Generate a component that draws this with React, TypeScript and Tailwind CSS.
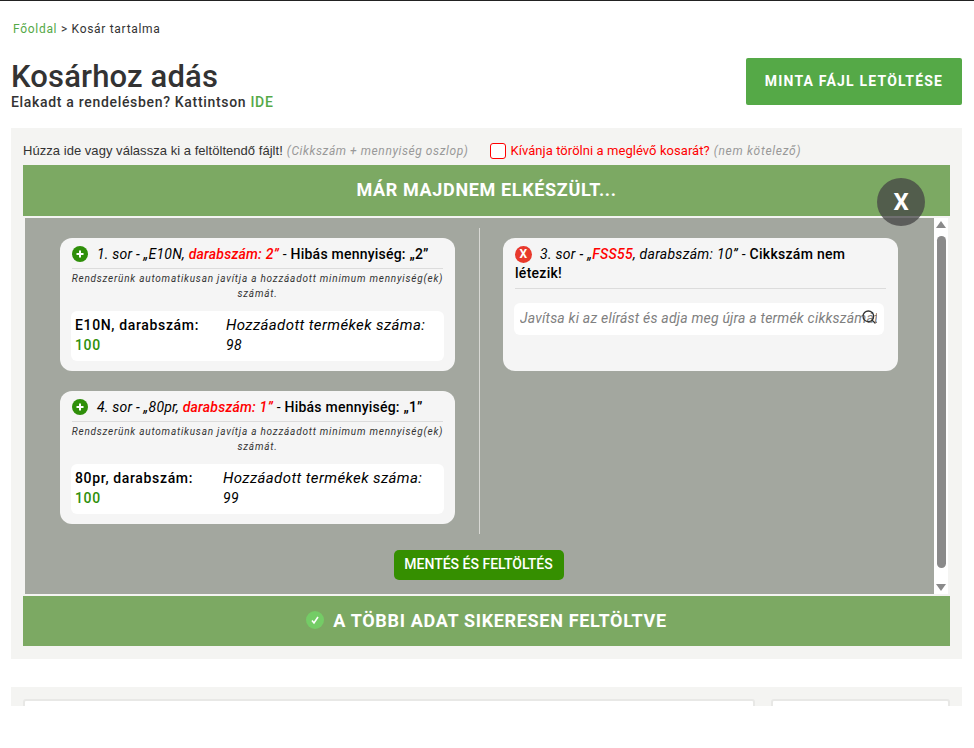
import { Search } from 'lucide-react'

function PlusIcon() {
  return (
    <span className="flex h-4 w-4 shrink-0 items-center justify-center rounded-full bg-[#2f8f0a]">
      <svg viewBox="0 0 10 10" className="h-2.5 w-2.5">
        <path d="M5 1.5v7M1.5 5h7" stroke="#fff" strokeWidth="2" />
      </svg>
    </span>
  )
}

function FixCard({
  row,
  code,
  qty,
  added,
  labelWidth,
}: {
  row: number
  code: string
  qty: number
  added: number
  labelWidth: string
}) {
  return (
    <div className="h-[133px] w-[395px] rounded-[12px] bg-[#f5f5f5] px-3 pt-[7px]">
      <div className="flex h-[18px] items-center gap-[9px] text-[14px] leading-[18px] text-black">
        <PlusIcon />
        <p className="whitespace-nowrap tracking-[0.22px]">
          <span className="italic">
            {row}. sor - „{code}, <span className="font-medium text-[#ff0000]">darabszám: {qty}”</span>
          </span>{' '}
          - <span className="font-medium">Hibás mennyiség: „{qty}”</span>
        </p>
      </div>
      <div className="mt-[5px] -mx-1 text-center text-[10px] leading-[15px] tracking-[0.78px] text-[#333] italic">
        <div className="mx-1 mb-[2px] border-t border-[#dcdcdc]" />
        Rendszerünk automatikusan javítja a hozzáadott minimum mennyiség(ek) számát.
      </div>
      <div className="mt-[10px] -mx-px flex h-[50px] rounded-[6px] bg-white px-1 pt-[4px] text-[14px] leading-[20px] text-black">
        <div className={`${labelWidth} shrink-0 tracking-[0.65px]`}>
          <div className="font-medium">{code}, darabszám:</div>
          <div className="font-medium text-[#2f8f0a]">100</div>
        </div>
        <div className="text-[15px] tracking-[0.38px] italic">
          <div>Hozzáadott termékek száma:</div>
          <div className="text-[14px]">{added}</div>
        </div>
      </div>
    </div>
  )
}

function ErrorCard() {
  return (
    <div className="h-[133px] w-[395px] rounded-[12px] bg-[#f5f5f5] px-3 pt-[7px]">
      <p className="text-[14px] leading-[18px] tracking-[0.28px] text-black">
        <span className="mr-2 inline-flex h-[17px] w-[17px] -translate-y-[1px] items-center justify-center rounded-full bg-[#e8392c] align-middle text-[12px] leading-none font-bold text-white">
          X
        </span>
        <span className="italic">
          3. sor - „<span className="font-medium text-[#ff0000]">FSS55</span>, darabszám: 10”
        </span>{' '}
        - <span className="font-medium">Cikkszám nem létezik!</span>
      </p>
      <div className="mt-[6px] border-t border-[#dcdcdc]" />
      <div className="relative mt-[14px] -ml-px h-[32px] w-[370px] rounded-[6px] bg-white pl-[6px] text-[14px] leading-[30px] tracking-[0.2px] text-[#808080] italic">
        <div className="w-[357px] overflow-hidden whitespace-nowrap">
          Javítsa ki az elírást és adja meg újra a termék cikkszámát
        </div>
        <Search className="absolute top-[6px] right-[7px] h-4 w-4 text-[#333]" strokeWidth={2} />
      </div>
    </div>
  )
}

export default function App() {
  return (
    <div className="h-[748px] border-t border-[#222] bg-white font-['Roboto',sans-serif] text-[#333]">
      <div className="px-[13px] pt-[20px] text-[12px] leading-[16px] tracking-[0.7px]">
        <span className="text-[#55a947]">Főoldal</span> &gt; Kosár tartalma
      </div>

      <div className="mt-[21px] flex items-start justify-between pr-[12px] pl-[11px]">
        <div className="pt-[3px]">
          <h1 className="text-[31px] leading-[32px] font-medium tracking-[0.15px]">Kosárhoz adás</h1>
          <p className="text-[14px] leading-[18px] font-medium tracking-[0.68px]">
            Elakadt a rendelésben? Kattintson <span className="text-[#55a947]">IDE</span>
          </p>
        </div>
        <button
          type="button"
          className="h-[47px] w-[216px] rounded-[2px] bg-[#55a947] text-[14px] font-bold tracking-[1.2px] text-white"
        >
          MINTA FÁJL LETÖLTÉSE
        </button>
      </div>

      <div className="relative mx-[11px] mt-[17px] h-[531px] w-[951px] bg-[#f4f4f2] px-3">
        <div className="flex h-[37px] items-center pt-[8px] text-[13px] leading-[16px]">
          <span className="font-['Liberation_Sans',sans-serif] text-[13px] tracking-[0.04px]">Húzza ide vagy válassza ki a feltöltendő fájlt!</span>
          <span className="ml-1 text-[12px] tracking-[0.58px] text-[#999] italic">(Cikkszám + mennyiség oszlop)</span>
          <span className="ml-[22px] h-4 w-4 rounded-[3px] border border-[#ff0000] bg-white" />
          <span className="ml-1 tracking-[0.06px] text-[#ff0000]">Kívánja törölni a meglévő kosarát?</span>
          <span className="ml-1 text-[12px] tracking-[0.7px] text-[#999] italic">(nem kötelező)</span>
        </div>

        <div className="flex h-[51px] items-center justify-center bg-[#7ca963] pb-[3px] text-[18px] font-bold tracking-[0.65px] text-white">
          MÁR MAJDNEM ELKÉSZÜLT...
        </div>

        <div className="flex h-[380px] rounded-[2px] border-2 border-[#f4f4f2] bg-[#a3a79f]">
          <div className="flex flex-1 flex-col">
            <div className="flex pt-[10px]">
              <div className="flex h-[306px] w-[455px] flex-col gap-5 border-r border-[#d8d8d4] pt-[10px] pl-[35px]">
                <FixCard row={1} code="E10N" qty={2} added={98} labelWidth="w-[151px]" />
                <FixCard row={4} code="80pr" qty={1} added={99} labelWidth="w-[148px]" />
              </div>
              <div className="pt-[10px] pl-[23px]">
                <ErrorCard />
              </div>
            </div>
            <div className="mt-[16px] flex justify-center pr-[2px]">
              <button
                type="button"
                className="h-[30px] w-[170px] rounded-[5px] bg-[#358f00] pb-[1px] text-[14px] font-medium text-white"
              >
                MENTÉS ÉS FELTÖLTÉS
              </button>
            </div>
          </div>
          <div className="flex w-[14px] flex-col items-center bg-white py-[3px]">
            <span className="h-0 w-0 border-x-[5px] border-b-[7px] border-x-transparent border-b-[#8a8a8a]" />
            <span className="mt-[8px] h-[332px] w-[9px] rounded-full bg-[#8a8a8a]" />
            <span className="mt-auto h-0 w-0 border-x-[5px] border-t-[7px] border-x-transparent border-t-[#8a8a8a]" />
          </div>
        </div>

        <div className="flex h-[50px] items-center justify-center gap-[9px] bg-[#7ca963] pb-[2px] text-[18px] font-bold tracking-[0.68px] text-white">
          <span className="flex h-[18px] w-[18px] items-center justify-center rounded-full bg-[#74cc66]">
            <svg viewBox="0 0 12 12" className="h-3 w-3">
              <path d="M3 6.5l2 2.5 4-6" fill="none" stroke="#fff" strokeWidth="1.6" />
            </svg>
          </span>
          A TÖBBI ADAT SIKERESEN FELTÖLTVE
        </div>

        <button
          type="button"
          className="absolute top-[50px] left-[866px] flex h-12 w-12 items-center justify-center rounded-full bg-[#444444]/75 text-[24px] font-bold text-white"
        >
          X
        </button>
      </div>

      <div className="mx-[11px] mt-[28px] flex h-[19px] w-[951px] gap-4 overflow-hidden bg-[#f4f4f2] px-3 pt-3">
        <div className="h-10 w-[732px] rounded-[3px] border-2 border-[#e8e8e6] bg-white" />
        <div className="h-10 w-[179px] rounded-[3px] border-2 border-[#e8e8e6] bg-white" />
      </div>
    </div>
  )
}
